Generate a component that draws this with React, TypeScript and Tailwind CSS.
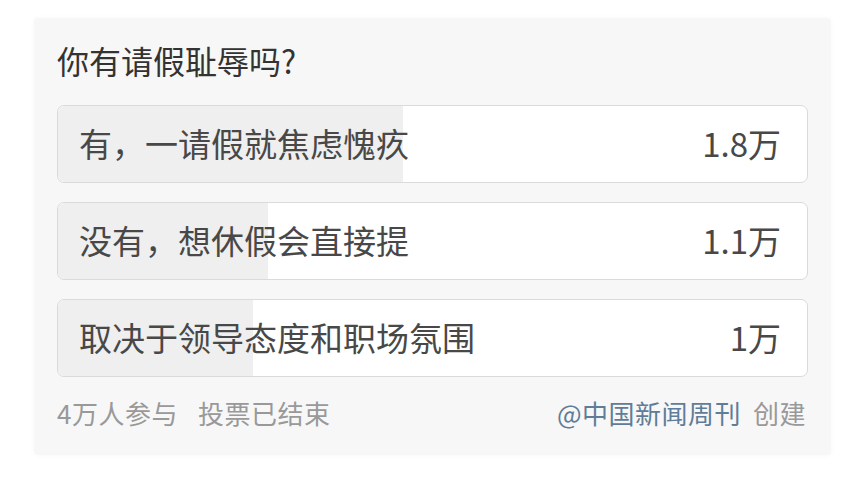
const options = [
  { label: '有，一请假就焦虑愧疚', value: '1.8万', pct: 46 },
  { label: '没有，想休假会直接提', value: '1.1万', pct: 28.1 },
  { label: '取决于领导态度和职场氛围', value: '1万', pct: 26 },
]

export default function App() {
  return (
    <div
      className="w-[865px] h-[487px] bg-white overflow-hidden"
      style={{ fontFamily: '"Noto Sans CJK SC", "Noto Sans", sans-serif' }}
    >
      <div className="ml-[34px] mt-[18px] w-[797px] h-[437px] bg-[#f7f7f7] rounded-[4px] shadow-[0_0_6px_rgba(0,0,0,0.03)] px-[23px] pt-[22px]">
        <h1 className="text-[32px] leading-[40px] text-[#333] mb-[25px]">你有请假耻辱吗?</h1>
        <div className="flex flex-col gap-[19px]">
          {options.map((o) => (
            <div
              key={o.label}
              className="relative h-[78px] rounded-[7px] border border-[#dadada] bg-white overflow-hidden"
            >
              <div className="absolute left-0 top-0 bottom-0 bg-[#efefef]" style={{ width: `${o.pct}%` }} />
              <div className="relative flex h-full items-center justify-between pl-[21px] pr-[26px] text-[33px] text-[#484848]">
                <span>{o.label}</span>
                <span>{o.value}</span>
              </div>
            </div>
          ))}
        </div>
        <div className="mt-[20px] flex items-center justify-between text-[26px] leading-[32px] tracking-[0.5px] text-[#999]">
          <div className="flex gap-[20px]">
            <span>4万人参与</span>
            <span>投票已结束</span>
          </div>
          <div className="flex gap-[12px] pr-[2px]">
            <span className="text-[#5f7d99]">@中国新闻周刊</span>
            <span>创建</span>
          </div>
        </div>
      </div>
    </div>
  )
}
